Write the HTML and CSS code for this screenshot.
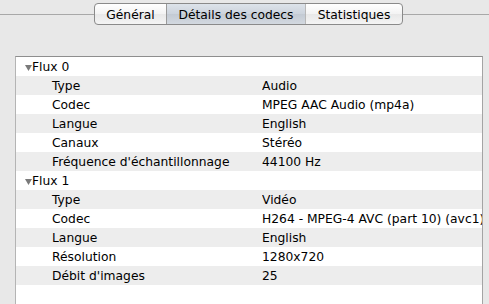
FILE: index.html
```html
<!DOCTYPE html>
<html lang="fr">
<head>
<meta charset="utf-8">
<link rel="stylesheet" href="styles.css">
</head>
<body>
<div class="window">
  <div class="tabbar">
    <div class="rule rule-left"></div>
    <div class="tabs">
      <div class="tab tab-general">Général</div>
      <div class="tab tab-codecs selected">Détails des codecs</div>
      <div class="tab tab-stats">Statistiques</div>
    </div>
    <div class="rule rule-right"></div>
  </div>
  <div class="outline">
    <div class="row group"><span class="label"><svg class="disclosure" width="7" height="6" viewBox="0 0 7 6"><path d="M0 0H7L3.5 6Z" fill="#7a7a7a"/></svg>Flux 0</span><span class="value"></span></div>
    <div class="row alt"><span class="label child">Type</span><span class="value">Audio</span></div>
    <div class="row"><span class="label child">Codec</span><span class="value">MPEG AAC Audio (mp4a)</span></div>
    <div class="row alt"><span class="label child">Langue</span><span class="value">English</span></div>
    <div class="row"><span class="label child">Canaux</span><span class="value">Stéréo</span></div>
    <div class="row alt"><span class="label child">Fréquence d'échantillonnage</span><span class="value">44100 Hz</span></div>
    <div class="row group"><span class="label"><svg class="disclosure" width="7" height="6" viewBox="0 0 7 6"><path d="M0 0H7L3.5 6Z" fill="#7a7a7a"/></svg>Flux 1</span><span class="value"></span></div>
    <div class="row alt"><span class="label child">Type</span><span class="value">Vidéo</span></div>
    <div class="row"><span class="label child">Codec</span><span class="value">H264 - MPEG-4 AVC (part 10) (avc1)</span></div>
    <div class="row alt"><span class="label child">Langue</span><span class="value">English</span></div>
    <div class="row"><span class="label child">Résolution</span><span class="value">1280x720</span></div>
    <div class="row alt"><span class="label child">Débit d'images</span><span class="value">25</span></div>
    <div class="filler"></div>
  </div>
</div>
</body>
</html>
```

FILE: styles.css
```css
html, body {
  margin: 0;
  padding: 0;
  background: #e8e8e8;
  width: 489px;
  height: 304px;
  overflow: hidden;
  font-family: "DejaVu Sans", sans-serif;
  font-size: 12.3px;
  color: #000;
}

.window {
  display: flex;
  flex-direction: column;
  height: 304px;
}

.tabbar {
  display: flex;
  align-items: center;
  height: 22px;
  margin-top: 3px;
}

.rule {
  height: 1px;
  background: #a8a8a8;
}

.rule-left {
  width: 94px;
}

.rule-right {
  flex: 1;
}

.tabs {
  display: flex;
  height: 22px;
  box-sizing: border-box;
  border: 1px solid #8a8a8a;
  border-radius: 4px;
  overflow: hidden;
  background: linear-gradient(#ffffff, #f3f3f3 50%, #e8e8e8 51%, #f4f4f4);
}

.tab {
  display: flex;
  align-items: center;
  justify-content: center;
  line-height: 18px;
  padding-top: 1px;
  box-sizing: border-box;
}

.tab-general {
  width: 71px;
}

.tab-codecs {
  width: 140px;
  border-left: 1px solid #9a9a9a;
  border-right: 1px solid #b8b8b8;
}

.tab-stats {
  width: 96px;
}

.tab.selected {
  background: linear-gradient(#dde3ea, #ccd3dc 50%, #c3cad3 51%, #d3d9e0);
}

.outline {
  margin: 31px 6px 0 15px;
  flex: 1;
  background: #fff;
  border-top: 1px solid #8e8e8e;
  border-left: 1px solid #b4b4b4;
  border-right: 1px solid #a4a4a4;
  display: flex;
  flex-direction: column;
  overflow: hidden;
}

.row {
  display: grid;
  grid-template-columns: 246px minmax(0, 1fr);
  height: 19px;
  box-sizing: border-box;
  padding-top: 2px;
  line-height: 17px;
  white-space: nowrap;
}

.row.alt {
  background: #ededed;
}

.label {
  display: flex;
  align-items: center;
  padding-left: 9px;
  overflow: hidden;
}

.label.child {
  padding-left: 36px;
}

.value {
  overflow: hidden;
  min-width: 0;
}

.disclosure {
  flex: none;
  margin-right: 0;
  margin-top: 1px;
}

.filler {
  flex: 1;
}
```
